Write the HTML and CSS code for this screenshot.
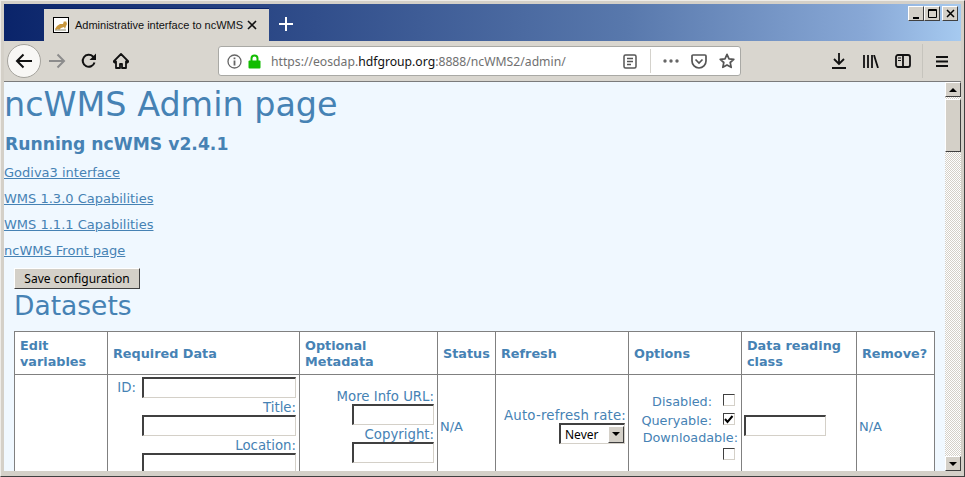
FILE: index.html
```html
<!DOCTYPE html>
<html lang="en">
  <head>
    <meta charset="UTF-8" />
    <title>Administrative interface to ncWMS</title>
    <link rel="stylesheet" href="styles.css">
  </head>
  <body>
    <div class="window">
      <!-- title bar and tab -->
      <div class="titlebar">
        <div class="tab">
          <svg class="favicon" width="16" height="16" viewBox="0 0 16 16">
            <rect x="0.5" y="0.5" width="15" height="15" fill="#fff" stroke="#000"/>
            <path d="M2 12l2-3 3-2 3 0 1-3 1 1 1-1 1 3-1 2-1 3-1-2-3 1-2 2-1-1-2 1z" fill="#c8963c"/>
            <path d="M2 13h11" stroke="#8a8a70"/>
          </svg>
          <span class="tab-title">Administrative interface to ncWMS</span>
          <svg class="tab-close" width="10" height="10" viewBox="0 0 10 10">
            <path d="M1 1l8 8M9 1l-8 8" stroke="#111" stroke-width="1.6"/>
          </svg>
        </div>
        <svg class="newtab" width="14" height="14" viewBox="0 0 14 14">
          <path d="M7 0v14M0 7h14" stroke="#fff" stroke-width="2"/>
        </svg>
        <div class="winbtns">
          <div class="winbtn"><svg width="15" height="14" viewBox="0 0 15 14"><path d="M4 10h6v2H4z" fill="#000"/></svg></div>
          <div class="winbtn"><svg width="15" height="14" viewBox="0 0 15 14"><path d="M3.500 2.500h8v8h-8z" fill="none" stroke="#000"/><path d="M3 3.500h9" stroke="#000"/></svg></div>
          <div class="winbtn close"><svg width="15" height="14" viewBox="0 0 15 14"><path d="M4 3l7 7M11 3l-7 7" stroke="#000" stroke-width="1.5"/></svg></div>
        </div>
      </div>

      <!-- toolbar -->
      <div class="toolbar">
        <div class="back">
          <svg width="18" height="16" viewBox="0 0 18 16"><path d="M17 8H2M8.500 1.500L2 8l6.500 6.500" fill="none" stroke="#111" stroke-width="2"/></svg>
        </div>
        <svg class="forward" width="18" height="16" viewBox="0 0 18 16"><path d="M1 8h15M9.500 1.500L16 8l-6.500 6.500" fill="none" stroke="#8c8c8c" stroke-width="2"/></svg>
        <svg class="reload" width="16" height="16" viewBox="0 0 16 16"><path d="M13.500 9.500A6 6 0 1 1 12 3.500L14.500 5.500" fill="none" stroke="#111" stroke-width="2"/><path d="M15 .5v6.500H8.500z" fill="#111"/></svg>
        <svg class="home" width="16" height="16" viewBox="0 0 16 16"><path d="M8 1L0.500 8.500l1.200 1L3 8.500V15h4v-4h2v4h4V8.500l1.300 1 1.200-1z" fill="none" stroke="#111" stroke-width="1.800" stroke-linejoin="round"/></svg>

        <div class="urlbar">
          <svg class="info" width="15" height="15" viewBox="0 0 15 15"><circle cx="7.500" cy="7.500" r="6.500" fill="none" stroke="#666" stroke-width="1.300"/><path d="M7.500 6.500v5M7.500 3.500v1.800" stroke="#666" stroke-width="1.800"/></svg>
          <svg class="lock" width="13" height="15" viewBox="0 0 13 15"><path d="M3.500 7V4.500a3 3 0 0 1 6 0V7" fill="none" stroke="#12bc00" stroke-width="2"/><rect x="0.500" y="6.500" width="12" height="8" rx="1" fill="#12bc00"/></svg>
          <span class="url">https://eosdap.<b>hdfgroup.org</b>:8888/ncWMS2/admin/</span>
          <svg class="reader" width="14" height="15" viewBox="0 0 14 15"><rect x="1" y="1" width="12" height="13" rx="1.500" fill="none" stroke="#555" stroke-width="1.500"/><path d="M4 4.500h6M4 7.500h6M4 10.500h4" stroke="#555" stroke-width="1.300"/></svg>
          <div class="urlsep"></div>
          <svg class="dots" width="16" height="4" viewBox="0 0 16 4"><circle cx="2" cy="2" r="1.700" fill="#666"/><circle cx="8" cy="2" r="1.700" fill="#666"/><circle cx="14" cy="2" r="1.700" fill="#666"/></svg>
          <svg class="pocket" width="16" height="15" viewBox="0 0 16 15"><path d="M2 1h12a1 1 0 0 1 1 1v5a7 7 0 0 1-14 0V2a1 1 0 0 1 1-1z" fill="none" stroke="#555" stroke-width="1.700"/><path d="M4.500 5.500L8 9l3.500-3.500" fill="none" stroke="#555" stroke-width="1.700"/></svg>
          <svg class="star" width="16" height="16" viewBox="0 0 16 16"><path d="M8 1.300l2 4.500 4.800.5-3.600 3.200 1 4.800L8 11.900l-4.200 2.400 1-4.800L1.200 6.300 6 5.800z" fill="none" stroke="#555" stroke-width="1.700" stroke-linejoin="round"/></svg>
        </div>

        <svg class="download" width="14" height="16" viewBox="0 0 14 16"><path d="M7 0v10M2 6l5 5 5-5" fill="none" stroke="#111" stroke-width="1.800"/><path d="M0 15h14" stroke="#111" stroke-width="2"/></svg>
        <svg class="library" width="16" height="13" viewBox="0 0 16 13"><path d="M1 0v13M5 0v13M9 0v13M11 0l4 13" stroke="#111" stroke-width="1.800"/></svg>
        <svg class="sidebar" width="16" height="14" viewBox="0 0 16 14"><rect x="1" y="1" width="14" height="12" rx="2" fill="none" stroke="#111" stroke-width="1.800"/><path d="M8 1v12" stroke="#111" stroke-width="1.800"/><path d="M3 4h3M3 6.500h3" stroke="#111"/></svg>
        <div class="toolsep"></div>
        <svg class="menu" width="12" height="11" viewBox="0 0 12 11"><path d="M0 1h12M0 5.500h12M0 10h12" stroke="#111" stroke-width="2"/></svg>
      </div>

      <!-- page -->
      <div class="viewport">
        <div class="page">
          <h1>ncWMS Admin page</h1>
          <h2 class="running">Running ncWMS v2.4.1</h2>
          <p><a href="#">Godiva3 interface</a></p>
          <p><a href="#">WMS 1.3.0 Capabilities</a></p>
          <p><a href="#">WMS 1.1.1 Capabilities</a></p>
          <p><a href="#">ncWMS Front page</a></p>
          <div class="indent">
            <button class="save">Save configuration</button>
            <h2 class="datasets">Datasets</h2>
            <table>
              <colgroup>
                <col class="c1"><col class="c2"><col class="c3"><col class="c4">
                <col class="c5"><col class="c6"><col class="c7"><col class="c8">
              </colgroup>
              <tr>
                <th>Edit variables</th>
                <th>Required Data</th>
                <th>Optional Metadata</th>
                <th>Status</th>
                <th>Refresh</th>
                <th>Options</th>
                <th>Data reading class</th>
                <th>Remove?</th>
              </tr>
              <tr>
                <td></td>
                <td class="right required">
                  <div class="field"><span class="id-label">ID:</span><span class="input"></span></div>
                  <div class="label">Title:</div>
                  <div class="field"><span class="input"></span></div>
                  <div class="label">Location:</div>
                  <div class="field"><span class="input"></span></div>
                </td>
                <td class="right optional">
                  <div class="label">More Info URL:</div>
                  <div class="field"><span class="input short"></span></div>
                  <div class="label">Copyright:</div>
                  <div class="field"><span class="input short"></span></div>
                </td>
                <td>N/A</td>
                <td class="right refresh">
                  <div class="label">Auto-refresh rate:</div>
                  <div class="field">
                    <div class="select">
                      <span class="select-value">Never</span>
                      <span class="arrow-btn"><i class="tri-down"></i></span>
                    </div>
                  </div>
                </td>
                <td class="right opts">
                  <div class="opt">Disabled:<span class="check"></span></div>
                  <div class="opt">Queryable:<span class="check">
                    <svg width="10" height="9" viewBox="0 0 10 9"><path d="M1 4l2.500 3L8.500 1" fill="none" stroke="#000" stroke-width="2"/></svg>
                  </span></div>
                  <div class="label dl">Downloadable:</div>
                  <div class="opt last"><span class="check"></span></div>
                </td>
                <td><span class="input cls"></span></td>
                <td>N/A</td>
              </tr>
            </table>
          </div>
        </div>
        <div class="scrollbar">
          <div class="sb-btn"><i class="tri-up"></i></div>
          <div class="sb-thumb"></div>
          <div class="sb-track"></div>
          <div class="sb-btn"><i class="tri-down"></i></div>
        </div>
      </div>
    </div>
  </body>
</html>
```

FILE: styles.css
```css
* {
  margin: 0;
  padding: 0;
  box-sizing: border-box;
}

body {
  width: 965px;
  height: 477px;
  overflow: hidden;
  background-color: #d4d0c8;
}

.window {
  width: 965px;
  height: 477px;
  display: flex;
  flex-direction: column;
  border: 1px solid;
  border-color: #eeece8 #404040 #404040 #eeece8;
  padding: 3px 3px 3px 3px;
  overflow: hidden;
}

/* title bar */
.titlebar {
  height: 37px;
  flex: none;
  display: flex;
  align-items: flex-end;
  padding-left: 40px;
  background: linear-gradient(90deg, #0a246a 0%, #5878ac 65%, #88a8d6 90%, #a6caf0 100%);
}

.tab {
  width: 225px;
  height: 33px;
  display: flex;
  align-items: center;
  padding-left: 9px;
  background-color: #d9d6cf;
  border-top: 1px solid #0a246a;
  font-family: "Liberation Sans", sans-serif;
  font-size: 11px;
  color: #111;
}

.favicon {
  flex: none;
}

.tab-title {
  margin-left: 6px;
  white-space: nowrap;
  width: 170px;
}

.tab-close {
  flex: none;
  margin-left: 2px;
}

.newtab {
  margin: 0 0 10px 10px;
}

.winbtns {
  margin-left: auto;
  align-self: flex-start;
  display: flex;
  padding: 2px 3px 0 0;
}

.winbtn {
  width: 16px;
  height: 15px;
  background-color: #d4d0c8;
  border: 1px solid;
  border-color: #fff #404040 #404040 #fff;
  display: flex;
  align-items: center;
  justify-content: center;
}

.winbtn svg {
  flex: none;
}

.winbtn.close {
  margin-left: 2px;
}

/* toolbar */
.toolbar {
  height: 41px;
  flex: none;
  display: flex;
  align-items: center;
  background-color: #d9d6cf;
  border-bottom: 1px solid #7b7b7b;
}

.toolbar > svg {
  flex: none;
}

.back {
  width: 34px;
  height: 34px;
  margin-left: 3px;
  flex: none;
  display: flex;
  align-items: center;
  justify-content: center;
  background-color: #f8f7f5;
  border: 1px solid #a5a39d;
  border-radius: 50%;
}

.forward {
  margin-left: 7px;
}

.reload {
  margin-left: 15px;
}

.home {
  margin-left: 16px;
}

.urlbar {
  width: 523px;
  height: 30px;
  margin-left: 89px;
  flex: none;
  display: flex;
  align-items: center;
  background-color: #fff;
  border: 1px solid #a9a9a5;
  border-radius: 3px;
}

.urlbar svg {
  flex: none;
}

.info {
  margin-left: 8px;
}

.lock {
  margin-left: 6px;
}

.url {
  width: 349px;
  margin-left: 10px;
  font-family: "Noto Sans", sans-serif;
  font-size: 12.2px;
  color: #707070;
  white-space: nowrap;
}

.url b {
  font-weight: normal;
  color: #111;
}

.reader {
  margin-left: 3px;
}

.urlsep {
  width: 1px;
  height: 24px;
  margin-left: 13px;
  background-color: #d4d2cc;
}

.dots {
  margin-left: 12px;
}

.pocket {
  margin-left: 12px;
}

.star {
  margin-left: 12px;
}

.download {
  margin-left: 91px;
}

.library {
  margin-left: 17px;
}

.sidebar {
  margin-left: 16px;
}

.toolsep {
  width: 1px;
  height: 34px;
  margin-left: 11px;
  background-color: #c6c4bd;
}

.menu {
  margin-left: 13px;
}

/* page */
.viewport {
  flex: 1;
  min-height: 0;
  display: flex;
  overflow: hidden;
  background-color: #f0f8ff;
  border-bottom: 2px solid #d4d0c8;
}

.page {
  flex: 1;
  min-width: 0;
  height: 100%;
  overflow: hidden;
  font-family: "DejaVu Sans", Verdana, sans-serif;
  font-size: 13px;
  color: #4682b4;
}

h1 {
  font-size: 33.4px;
  font-weight: normal;
  line-height: 45px;
  white-space: nowrap;
}

.running {
  margin-top: 7px;
  padding-left: 1px;
  font-size: 17.2px;
  font-weight: bold;
  line-height: 20px;
}

.page p {
  margin-top: 11px;
  line-height: 15px;
}

a {
  color: #4682b4;
}

.indent {
  padding-left: 10px;
  width: 941px;
}

.save {
  display: block;
  width: 126px;
  height: 21px;
  margin-top: 10px;
  font-family: "Noto Sans", sans-serif;
  font-size: 12px;
  color: #000;
  background-color: #d4d0c8;
  border: 1px solid;
  border-color: #fff #404040 #404040 #fff;
}

.datasets {
  font-size: 26.5px;
  font-weight: normal;
  line-height: 34px;
  margin-bottom: 8px;
}

/* datasets table */
table {
  width: 920px;
  table-layout: fixed;
  border-collapse: collapse;
  background-color: #fff;
}

th, td {
  border: 1px solid #808080;
}

th {
  height: 43px;
  padding: 2px 5px 0;
  font-size: 12.8px;
  line-height: 16px;
  text-align: left;
  vertical-align: middle;
}

td {
  height: 102px;
  padding: 2px 2px 0;
  line-height: 16px;
}

.c1 { width: 93px; }
.c2 { width: 192px; }
.c3 { width: 138px; }
.c4 { width: 58px; }
.c5 { width: 133px; }
.c6 { width: 113px; }
.c7 { width: 115px; }
.c8 { width: 78px; }

.right {
  text-align: right;
  font-size: 13.3px;
  vertical-align: top;
}

.required {
  padding: 2px 3px 0 0;
}

.optional {
  padding: 12px 3px 0 0;
}

.refresh {
  padding: 31px 3px 0 0;
}

.refresh .label {
  margin-right: -1px;
  letter-spacing: 0.2px;
}

.label {
  height: 17px;
  line-height: 20px;
  white-space: nowrap;
}

.field {
  height: 21px;
  line-height: 21px;
  white-space: nowrap;
}

.id-label {
  display: inline-block;
  height: 21px;
  margin-right: 6px;
  line-height: 22px;
  vertical-align: top;
}

.input {
  display: inline-block;
  width: 154px;
  height: 21px;
  vertical-align: top;
  background-color: #fff;
  border: 2px solid;
  border-color: #404040 #d4d0c8 #d4d0c8 #404040;
  border-width: 2px 1px 1px 2px;
}

.input.short {
  width: 82px;
}

.input.cls {
  width: 82px;
  display: block;
  margin-top: -2px;
}

.select {
  display: inline-flex;
  width: 66px;
  height: 21px;
  vertical-align: top;
  align-items: center;
  justify-content: space-between;
  background-color: #fff;
  border: 1px solid;
  border-width: 2px 1px 1px 2px;
  border-color: #404040 #d4d0c8 #d4d0c8 #404040;
  font-family: "Noto Sans", sans-serif;
  font-size: 12px;
  color: #000;
}

.select-value {
  margin-left: 4px;
}

.arrow-btn {
  width: 16px;
  height: 17px;
  display: flex;
  align-items: center;
  justify-content: center;
  background-color: #d4d0c8;
  border: 1px solid;
  border-color: #fff #404040 #404040 #fff;
}

.tri-down {
  width: 0;
  height: 0;
  border: 4px solid transparent;
  border-top-color: #000;
  border-bottom-width: 0;
}

.tri-up {
  width: 0;
  height: 0;
  border: 4px solid transparent;
  border-bottom-color: #000;
  border-top-width: 0;
}

.opts {
  padding: 17px 2px 0 0;
  font-size: 12.8px;
}

.opt {
  display: flex;
  justify-content: flex-end;
  align-items: center;
  height: 19px;
  white-space: nowrap;
}

.label.dl {
  height: 16px;
  line-height: 16px;
  padding-right: 1px;
}

.opt.last {
  height: 14px;
  margin-top: 1px;
}

.check {
  display: flex;
  align-items: center;
  justify-content: center;
  width: 12px;
  height: 12px;
  margin: 0 4px 3px 11px;
  background-color: #fff;
  border: 1px solid;
  border-color: #404040 #d4d0c8 #d4d0c8 #404040;
}

.opt.last .check {
  margin-bottom: 0;
}

/* scrollbar */
.scrollbar {
  width: 16px;
  flex: none;
  display: flex;
  flex-direction: column;
  background: repeating-conic-gradient(#d4d0c8 0 25%, #fff 0 50%) 0 0 / 2px 2px;
}

.sb-btn {
  height: 15px;
  flex: none;
  display: flex;
  align-items: center;
  justify-content: center;
  background-color: #d4d0c8;
  border: 1px solid;
  border-color: #fff #404040 #404040 #fff;
}

.sb-thumb {
  height: 53px;
  flex: none;
  margin-top: 2px;
  background-color: #d4d0c8;
  border: 1px solid;
  border-color: #fff #404040 #404040 #fff;
}

.sb-track {
  flex: 1;
}
```
